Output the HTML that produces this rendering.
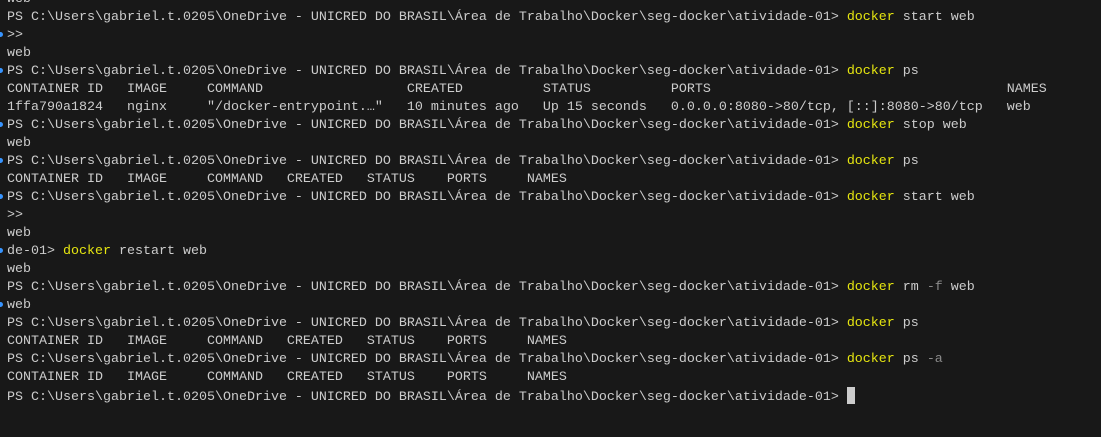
<!DOCTYPE html>
<html><head><meta charset="utf-8"><style>
html,body{margin:0;padding:0;background:#181818;width:1101px;height:437px;overflow:hidden}
pre{position:absolute;left:7px;top:-9px;margin:0;font-family:"Liberation Mono",monospace;font-size:13.33px;line-height:18px;color:#cccccc;white-space:pre}
.y{color:#e5e510}.g{color:#8a8a8a}
.d{position:absolute;left:-2px;width:5px;height:5px;border-radius:50%;background:#3794ff}
.c{display:inline-block;width:8px;height:17px;background:#cccccc;vertical-align:-4px}
</style></head><body>
<div class="d" style="top:32px"></div><div class="d" style="top:68px"></div><div class="d" style="top:122px"></div><div class="d" style="top:158px"></div><div class="d" style="top:194px"></div><div class="d" style="top:248px"></div><div class="d" style="top:302px"></div>
<pre>web
PS C:\Users\gabriel.t.0205\OneDrive - UNICRED DO BRASIL\Área de Trabalho\Docker\seg-docker\atividade-01> <span class="y">docker</span> start web
&gt;&gt;
web
PS C:\Users\gabriel.t.0205\OneDrive - UNICRED DO BRASIL\Área de Trabalho\Docker\seg-docker\atividade-01> <span class="y">docker</span> ps
CONTAINER ID   IMAGE     COMMAND                  CREATED          STATUS          PORTS                                     NAMES
1ffa790a1824   nginx     "/docker-entrypoint.…"   10 minutes ago   Up 15 seconds   0.0.0.0:8080-&gt;80/tcp, [::]:8080-&gt;80/tcp   web
PS C:\Users\gabriel.t.0205\OneDrive - UNICRED DO BRASIL\Área de Trabalho\Docker\seg-docker\atividade-01> <span class="y">docker</span> stop web
web
PS C:\Users\gabriel.t.0205\OneDrive - UNICRED DO BRASIL\Área de Trabalho\Docker\seg-docker\atividade-01> <span class="y">docker</span> ps
CONTAINER ID   IMAGE     COMMAND   CREATED   STATUS    PORTS     NAMES
PS C:\Users\gabriel.t.0205\OneDrive - UNICRED DO BRASIL\Área de Trabalho\Docker\seg-docker\atividade-01> <span class="y">docker</span> start web
&gt;&gt;
web
de-01&gt; <span class="y">docker</span> restart web
web
PS C:\Users\gabriel.t.0205\OneDrive - UNICRED DO BRASIL\Área de Trabalho\Docker\seg-docker\atividade-01> <span class="y">docker</span> rm <span class="g">-f</span> web
web
PS C:\Users\gabriel.t.0205\OneDrive - UNICRED DO BRASIL\Área de Trabalho\Docker\seg-docker\atividade-01> <span class="y">docker</span> ps
CONTAINER ID   IMAGE     COMMAND   CREATED   STATUS    PORTS     NAMES
PS C:\Users\gabriel.t.0205\OneDrive - UNICRED DO BRASIL\Área de Trabalho\Docker\seg-docker\atividade-01> <span class="y">docker</span> ps <span class="g">-a</span>
CONTAINER ID   IMAGE     COMMAND   CREATED   STATUS    PORTS     NAMES
PS C:\Users\gabriel.t.0205\OneDrive - UNICRED DO BRASIL\Área de Trabalho\Docker\seg-docker\atividade-01> <span class="c"></span></pre>
</body></html>
